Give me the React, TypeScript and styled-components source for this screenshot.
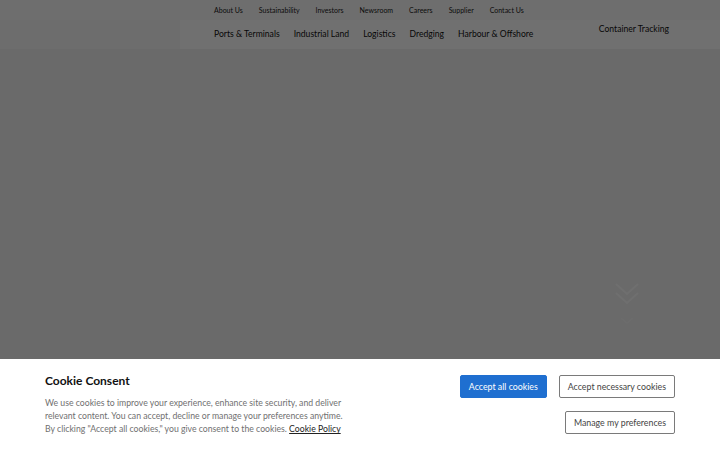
import styled, { createGlobalStyle } from 'styled-components';

const GlobalStyle = createGlobalStyle`
  html, body {
    margin: 0;
    padding: 0;
    height: 100%;
  }
  body {
    font-family: Lato, "Liberation Sans", sans-serif;
    background: #f1f1f1;
    overflow: hidden;
  }
  #root {
    height: 100%;
  }
`;

const topLinks = ['About Us', 'Sustainability', 'Investors', 'Newsroom', 'Careers', 'Supplier', 'Contact Us'];
const mainLinks = ['Ports & Terminals', 'Industrial Land', 'Logistics', 'Dredging', 'Harbour & Offshore'];

// 两个向下的箭头，提示往下滚动
const ScrollHint = () => (
  <svg width="26" height="50" viewBox="0 0 26 50" fill="none">
    <path d="M2 2 L13 12 L24 2" stroke="#fff" strokeOpacity="0.8" strokeWidth="2" />
    <path d="M2 11 L13 21 L24 11" stroke="#fff" strokeOpacity="0.8" strokeWidth="2" />
    <path d="M7 36 L13 41 L19 36" stroke="#fff" strokeOpacity="0.4" strokeWidth="1.6" />
  </svg>
);

const App = () => {
  return (
    <>
      <GlobalStyle />
      <Page>
        <Header>
          <TopBar>
            {topLinks.map((label) => (
              <TopLink key={label}>{label}</TopLink>
            ))}
          </TopBar>
          <NavRow>
            <LogoSpace />
            <NavPanel>
              <NavLinks>
                {mainLinks.map((label) => (
                  <NavLink key={label}>{label}</NavLink>
                ))}
              </NavLinks>
              <Tracking>Container Tracking</Tracking>
            </NavPanel>
          </NavRow>
        </Header>
        <Hero>
          <HintWrap>
            <ScrollHint />
          </HintWrap>
        </Hero>
        <Overlay />
        <Banner>
          <BannerText>
            <Title>Cookie Consent</Title>
            <Body>
              We use cookies to improve your experience, enhance site security, and deliver
              <br />
              relevant content. You can accept, decline or manage your preferences anytime.
              <br />
              By clicking "Accept all cookies," you give consent to the cookies. <PolicyLink>Cookie Policy</PolicyLink>
            </Body>
          </BannerText>
          <Actions>
            <ButtonRow>
              <Button $primary>Accept all cookies</Button>
              <Button>Accept necessary cookies</Button>
            </ButtonRow>
            <ButtonRow>
              <Button>Manage my preferences</Button>
            </ButtonRow>
          </Actions>
        </Banner>
      </Page>
    </>
  );
};

export default App;

const Page = styled.div`
  position: relative;
  height: 100%;
  display: flex;
  flex-direction: column;
`;

const Header = styled.header`
  background: #fbfbfb;
  box-shadow: 0 1px 2px rgba(0, 0, 0, 0.12);
`;

const TopBar = styled.div`
  height: 20px;
  display: flex;
  align-items: center;
  gap: 16px;
  padding-left: 214px;
`;

const TopLink = styled.a`
  font-size: 7px;
  color: #222;
`;

const NavRow = styled.div`
  display: flex;
  height: 29px;
`;

const LogoSpace = styled.div`
  width: 180px;
  background: #f8f8f8;
`;

const NavPanel = styled.div`
  flex: 1;
  display: flex;
  background: #ffffff;
  padding-left: 34px;
`;

const NavLinks = styled.nav`
  display: flex;
  align-items: center;
  gap: 14px;
  padding-bottom: 1px;
`;

const NavLink = styled.a`
  font-size: 8.6px;
  color: #111;
`;

const Tracking = styled.a`
  margin-left: auto;
  margin-right: 51px;
  padding-top: 4px;
  font-size: 8.6px;
  color: #111;
`;

const Hero = styled.main`
  flex: 1;
  position: relative;
  background: #f1f1f1;
`;

const HintWrap = styled.div`
  position: absolute;
  left: 614px;
  top: 233px;
`;

const Overlay = styled.div`
  position: absolute;
  inset: 0;
  background: rgba(0, 0, 0, 0.56);
`;

const Banner = styled.section`
  position: absolute;
  left: 0;
  right: 0;
  bottom: 0;
  height: 91px;
  box-sizing: border-box;
  background: #fff;
  display: flex;
  justify-content: space-between;
  align-items: flex-start;
  padding: 16px 45px 0;
`;

const BannerText = styled.div`
  display: flex;
  flex-direction: column;
`;

const Title = styled.h2`
  margin: -2px 0 0;
  font-size: 12px;
  font-weight: 700;
  color: #111;
  line-height: 16px;
`;

const Body = styled.p`
  margin: 7px 0 0;
  font-size: 8.7px;
  line-height: 13px;
  color: #707070;
`;

const PolicyLink = styled.a`
  color: #222;
  text-decoration: underline;
`;

const Actions = styled.div`
  display: flex;
  flex-direction: column;
  align-items: flex-end;
  gap: 13px;
`;

const ButtonRow = styled.div`
  display: flex;
  gap: 12px;
`;

const Button = styled.button<{ $primary?: boolean }>`
  height: 23px;
  box-sizing: border-box;
  padding: 0 8px;
  border-radius: 2px;
  font-family: inherit;
  font-size: 8.8px;
  white-space: nowrap;
  cursor: pointer;
  border: 1px solid ${(p) => (p.$primary ? '#1f6fd0' : '#7a7a7a')};
  background: ${(p) => (p.$primary ? '#1f6fd0' : '#fff')};
  color: ${(p) => (p.$primary ? '#fff' : '#444')};
`;
